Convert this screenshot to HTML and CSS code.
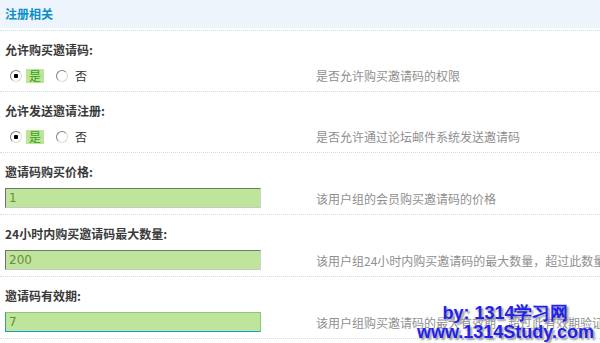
FILE: index.html
```html
<!DOCTYPE html>
<html>
<head>
    <meta charset="utf-8">
    <title>注册相关</title>
<link rel="stylesheet" href="styles.css">
</head>
<body>
    <div class="panel">
        <div class="panel-head"><h3>注册相关</h3></div>

        <div class="item">
            <div class="item-label">允许购买邀请码:</div>
            <div class="item-body">
                <ul class="radios">
                    <li class="checked"><input type="radio" name="buy_invite" checked><label>是</label></li>
                    <li><input type="radio" name="buy_invite"><label>否</label></li>
                </ul>
                <div class="tips">是否允许购买邀请码的权限</div>
            </div>
        </div>

        <div class="item">
            <div class="item-label">允许发送邀请注册:</div>
            <div class="item-body">
                <ul class="radios">
                    <li class="checked"><input type="radio" name="send_invite" checked><label>是</label></li>
                    <li><input type="radio" name="send_invite"><label>否</label></li>
                </ul>
                <div class="tips">是否允许通过论坛邮件系统发送邀请码</div>
            </div>
        </div>

        <div class="item">
            <div class="item-label">邀请码购买价格:</div>
            <div class="item-body">
                <input type="text" class="txt" value="1">
                <div class="tips">该用户组的会员购买邀请码的价格</div>
            </div>
        </div>

        <div class="item">
            <div class="item-label">24小时内购买邀请码最大数量:</div>
            <div class="item-body">
                <input type="text" class="txt" value="200">
                <div class="tips">该用户组24小时内购买邀请码的最大数量，超过此数量后将无法继续购买</div>
            </div>
        </div>

        <div class="item">
            <div class="item-label">邀请码有效期:</div>
            <div class="item-body">
                <input type="text" class="txt focus" value="7">
                <div class="tips">该用户组购买邀请码的最大有效期，超过此有效期验证码将自动失效</div>
            </div>
        </div>
    </div>

    <div class="watermark">
        <span>by: 1314学习网</span>
        <span>www.1314Study.com</span>
    </div>
</body>
</html>
```

FILE: styles.css
```css
body {
  margin: 0;
  overflow: hidden;
  position: relative;
  height: 343px;
  font-family: "Noto Sans CJK SC", "DejaVu Sans", sans-serif;
  font-size: 12px;
  color: #333;
  background: #fff;
}

.panel-head {
  padding-bottom: 2px;
  border-bottom: 1px dotted #c3e0f3;
}

.panel-head h3 {
  margin: 0;
  height: 28px;
  line-height: 28px;
  padding-left: 5px;
  font-size: 12px;
  font-weight: bold;
  color: #0b8fc6;
  background: #eef4fc;
}

.item {
  padding: 10px 0 6px 5px;
  border-bottom: 1px dotted #c3e0f3;
}

.item-label {
  line-height: 18px;
  font-weight: bold;
  color: #3a3a3a;
  margin-bottom: 7px;
}

.item-body {
  display: grid;
  grid-template-columns: 311px auto;
  align-items: center;
}

.tips {
  white-space: nowrap;
  color: #8f8f8f;
}

.radios {
  list-style: none;
  margin: 0;
  padding: 0;
  height: 19px;
  display: flex;
  align-items: center;
}

.radios li {
  display: flex;
  align-items: center;
}

.radios li + li {
  margin-left: 12px;
}

.radios input {
  -webkit-appearance: none;
  appearance: none;
  width: 12px;
  height: 12px;
  margin: 0 0 0 5px;
  border-radius: 50%;
  border: 1px solid;
  border-color: #808080 #dcdcd0 #dcdcd0 #808080;
  background: #fff;
}

.radios li + li input {
  margin-left: 0;
}

.radios input:checked {
  background: radial-gradient(circle, #000 0 2px, #fff 2.5px);
}

.radios label {
  margin-left: 4px;
  padding: 0 3px;
  line-height: 14px;
  color: #333;
}

.radios .checked label {
  background: #bde59a;
  color: #3c9c14;
}

.txt {
  box-sizing: border-box;
  width: 256px;
  height: 20px;
  margin: 0;
  padding: 0 3px;
  font-family: "DejaVu Sans", sans-serif;
  font-size: 12px;
  color: #6a8c3c;
  background: #bee59b;
  border: 1px solid;
  border-color: #6d7d63 #c9d9bf #c8c8c8 #707070;
  outline: none;
}

.txt.focus {
  border-color: #8cc86c #8cc86c #15a0cf #2ea38e;
}

.watermark {
  position: absolute;
  right: 6px;
  bottom: 1px;
  display: flex;
  flex-direction: column;
  align-items: center;
  font-family: "Liberation Sans", Arial, sans-serif;
  font-size: 18px;
  font-weight: bold;
  line-height: 19px;
  color: #2222ee;
  text-shadow: 2px 2px 2px #999;
}
```
